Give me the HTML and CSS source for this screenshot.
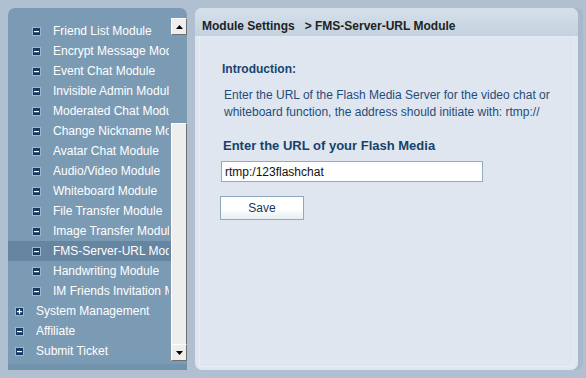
FILE: index.html
```html
<!DOCTYPE html>
<html>
<head>
<meta charset="utf-8">
<link rel="stylesheet" href="styles.css">
</head>
<body>
<div class="page">
  <aside class="side">
    <div class="scroller">
      <ul class="menu">
        <li class="row sub"><svg class="ico" viewBox="0 0 9 9"><rect x="0.5" y="0.5" width="8" height="8" fill="#173a63" stroke="#9fb6cb"/><rect x="2" y="4" width="5" height="1.2" fill="#fff"/></svg><span class="lbl">Friend List Module</span></li>
        <li class="row sub"><svg class="ico" viewBox="0 0 9 9"><rect x="0.5" y="0.5" width="8" height="8" fill="#173a63" stroke="#9fb6cb"/><rect x="2" y="4" width="5" height="1.2" fill="#fff"/></svg><span class="lbl">Encrypt Message Module</span></li>
        <li class="row sub"><svg class="ico" viewBox="0 0 9 9"><rect x="0.5" y="0.5" width="8" height="8" fill="#173a63" stroke="#9fb6cb"/><rect x="2" y="4" width="5" height="1.2" fill="#fff"/></svg><span class="lbl">Event Chat Module</span></li>
        <li class="row sub"><svg class="ico" viewBox="0 0 9 9"><rect x="0.5" y="0.5" width="8" height="8" fill="#173a63" stroke="#9fb6cb"/><rect x="2" y="4" width="5" height="1.2" fill="#fff"/></svg><span class="lbl">Invisible Admin Module</span></li>
        <li class="row sub"><svg class="ico" viewBox="0 0 9 9"><rect x="0.5" y="0.5" width="8" height="8" fill="#173a63" stroke="#9fb6cb"/><rect x="2" y="4" width="5" height="1.2" fill="#fff"/></svg><span class="lbl">Moderated Chat Module</span></li>
        <li class="row sub"><svg class="ico" viewBox="0 0 9 9"><rect x="0.5" y="0.5" width="8" height="8" fill="#173a63" stroke="#9fb6cb"/><rect x="2" y="4" width="5" height="1.2" fill="#fff"/></svg><span class="lbl">Change Nickname Module</span></li>
        <li class="row sub"><svg class="ico" viewBox="0 0 9 9"><rect x="0.5" y="0.5" width="8" height="8" fill="#173a63" stroke="#9fb6cb"/><rect x="2" y="4" width="5" height="1.2" fill="#fff"/></svg><span class="lbl">Avatar Chat Module</span></li>
        <li class="row sub"><svg class="ico" viewBox="0 0 9 9"><rect x="0.5" y="0.5" width="8" height="8" fill="#173a63" stroke="#9fb6cb"/><rect x="2" y="4" width="5" height="1.2" fill="#fff"/></svg><span class="lbl">Audio/Video Module</span></li>
        <li class="row sub"><svg class="ico" viewBox="0 0 9 9"><rect x="0.5" y="0.5" width="8" height="8" fill="#173a63" stroke="#9fb6cb"/><rect x="2" y="4" width="5" height="1.2" fill="#fff"/></svg><span class="lbl">Whiteboard Module</span></li>
        <li class="row sub"><svg class="ico" viewBox="0 0 9 9"><rect x="0.5" y="0.5" width="8" height="8" fill="#173a63" stroke="#9fb6cb"/><rect x="2" y="4" width="5" height="1.2" fill="#fff"/></svg><span class="lbl">File Transfer Module</span></li>
        <li class="row sub"><svg class="ico" viewBox="0 0 9 9"><rect x="0.5" y="0.5" width="8" height="8" fill="#173a63" stroke="#9fb6cb"/><rect x="2" y="4" width="5" height="1.2" fill="#fff"/></svg><span class="lbl">Image Transfer Module</span></li>
        <li class="row sub active"><svg class="ico" viewBox="0 0 9 9"><rect x="0.5" y="0.5" width="8" height="8" fill="#173a63" stroke="#9fb6cb"/><rect x="2" y="4" width="5" height="1.2" fill="#fff"/></svg><span class="lbl">FMS-Server-URL Module</span></li>
        <li class="row sub"><svg class="ico" viewBox="0 0 9 9"><rect x="0.5" y="0.5" width="8" height="8" fill="#173a63" stroke="#9fb6cb"/><rect x="2" y="4" width="5" height="1.2" fill="#fff"/></svg><span class="lbl">Handwriting Module</span></li>
        <li class="row sub"><svg class="ico" viewBox="0 0 9 9"><rect x="0.5" y="0.5" width="8" height="8" fill="#173a63" stroke="#9fb6cb"/><rect x="2" y="4" width="5" height="1.2" fill="#fff"/></svg><span class="lbl">IM Friends Invitation Module</span></li>
        <li class="row top"><svg class="ico" viewBox="0 0 9 9"><rect x="0.5" y="0.5" width="8" height="8" fill="#173a63" stroke="#9fb6cb"/><rect x="2" y="4" width="5" height="1.2" fill="#fff"/><rect x="3.9" y="2.1" width="1.2" height="5" fill="#fff"/></svg><span class="lbl">System Management</span></li>
        <li class="row top"><svg class="ico" viewBox="0 0 9 9"><rect x="0.5" y="0.5" width="8" height="8" fill="#173a63" stroke="#9fb6cb"/><rect x="2" y="4" width="5" height="1.2" fill="#fff"/></svg><span class="lbl">Affiliate</span></li>
        <li class="row top"><svg class="ico" viewBox="0 0 9 9"><rect x="0.5" y="0.5" width="8" height="8" fill="#173a63" stroke="#9fb6cb"/><rect x="2" y="4" width="5" height="1.2" fill="#fff"/></svg><span class="lbl">Submit Ticket</span></li>
      </ul>
      <div class="sbar">
        <div class="sbtn"><svg viewBox="0 0 7 4" class="arr"><polygon points="0,4 7,4 3.5,0" fill="#000"/></svg></div>
        <div class="strack"><div class="thumb"></div></div>
        <div class="sbtn"><svg viewBox="0 0 7 4" class="arr"><polygon points="0,0 7,0 3.5,4" fill="#000"/></svg></div>
      </div>
    </div>
  </aside>
  <main class="main">
    <div class="head">Module Settings&nbsp;&nbsp; &gt; FMS-Server-URL Module</div>
    <div class="body">
      <div class="inner">
        <h3 class="intro-title">Introduction:</h3>
        <p class="intro">Enter the URL of the Flash Media Server for the video chat or whiteboard function, the address should initiate with: rtmp://</p>
        <h2 class="field-title">Enter the URL of your Flash Media</h2>
        <input class="url" type="text" value="rtmp:/123flashchat">
        <button class="save">Save</button>
      </div>
    </div>
  </main>
</div>
</body>
</html>
```

FILE: styles.css
```css
html, body {
  margin: 0;
  padding: 0;
}
body {
  background: #b0c0d1;
  font-family: "Liberation Sans", Arial, sans-serif;
  font-size: 12px;
  width: 586px;
  height: 378px;
  overflow: hidden;
}
.page {
  display: flex;
  gap: 8px;
  padding: 8px 8px 8px 8px;
  height: 362px;
}
.side {
  width: 179px;
  flex: none;
  background: #7b9bb5;
  border-radius: 7px 7px 0 0;
  padding-top: 10px;
  box-sizing: border-box;
  border-bottom: 6px solid #7293ae;
}
.scroller {
  display: flex;
  height: 343px;
}
.menu {
  list-style: none;
  margin: 0;
  padding: 3px 0 0 0;
  width: 163px;
  overflow: hidden;
}
.row {
  display: flex;
  align-items: center;
  height: 20px;
  padding-right: 2px;
  color: #fff;
  white-space: nowrap;
}
.row.sub { padding-left: 24px; }
.row.top { padding-left: 7px; }
.row.active { background: #6685a1; }
.ico {
  width: 9px;
  height: 9px;
  flex: none;
  margin-right: 12px;
}
.lbl {
  flex: 1;
  min-width: 0;
  overflow: hidden;
  line-height: 20px;
}
.sbar {
  width: 16px;
  display: flex;
  flex-direction: column;
}
.sbtn {
  height: 17px;
  box-sizing: border-box;
  background: #eeeeee;
  border-top: 1px solid #fff;
  border-left: 1px solid #fff;
  border-right: 1px solid #6e6e6e;
  border-bottom: 1px solid #6e6e6e;
  display: flex;
  align-items: center;
  justify-content: center;
}
.arr {
  width: 7px;
  height: 4px;
}
.strack {
  flex: 1;
  display: flex;
  flex-direction: column;
  padding-top: 88px;
}
.thumb {
  flex: 1;
  background: #eeeeee;
  border-top: 1px solid #fff;
  border-left: 1px solid #fff;
  border-right: 1px solid #6e6e6e;
}
.main {
  width: 383px;
  flex: none;
  display: flex;
  flex-direction: column;
  border-radius: 7px;
  overflow: hidden;
  background: #dfe6ef;
  box-shadow: 5px 0 0 #a7b8ca;
}
.head {
  height: 29px;
  line-height: 31px;
  padding-top: 3px;
  padding-left: 7px;
  font-weight: bold;
  color: #222;
  background: linear-gradient(#d5e0ea, #c3d2df);
  border-bottom: 1px dotted #eef3f7;
  box-sizing: border-box;
  flex: none;
  overflow: visible;
}
.body {
  flex: 1;
  padding: 0 4px 3px 4px;
}
.inner {
  height: 100%;
  box-sizing: border-box;
  border-left: 1px dotted #f2f5f9;
  border-bottom: 1px dotted #f2f5f9;
  border-right: 1px dotted #e8eef4;
  padding: 24px 0 0 22px;
}
.intro-title {
  margin: 0;
  font-size: 12px;
  font-weight: bold;
  color: #17436d;
  line-height: 16px;
}
.intro {
  margin: 10px 0 0 2px;
  width: 345px;
  color: #1f4d7b;
  line-height: 17px;
}
.field-title {
  margin: 16px 0 0 1px;
  font-size: 13px;
  font-weight: bold;
  color: #16426b;
  line-height: 18px;
}
.url {
  display: block;
  margin: 6px 0 0 -1px;
  width: 262px;
  height: 21px;
  box-sizing: border-box;
  border: 1px solid #92abc0;
  background: #fff;
  padding: 0 3px;
  font-family: "Liberation Sans", Arial, sans-serif;
  font-size: 12px;
  color: #111;
  outline: none;
}
.save {
  display: block;
  margin: 14px 0 0 -2px;
  width: 84px;
  height: 24px;
  box-sizing: border-box;
  border: 1px solid #8fa9bf;
  background: linear-gradient(#ffffff 55%, #e6edf3);
  font-family: "Liberation Sans", Arial, sans-serif;
  font-size: 12px;
  color: #17395c;
  padding: 0;
}
```
